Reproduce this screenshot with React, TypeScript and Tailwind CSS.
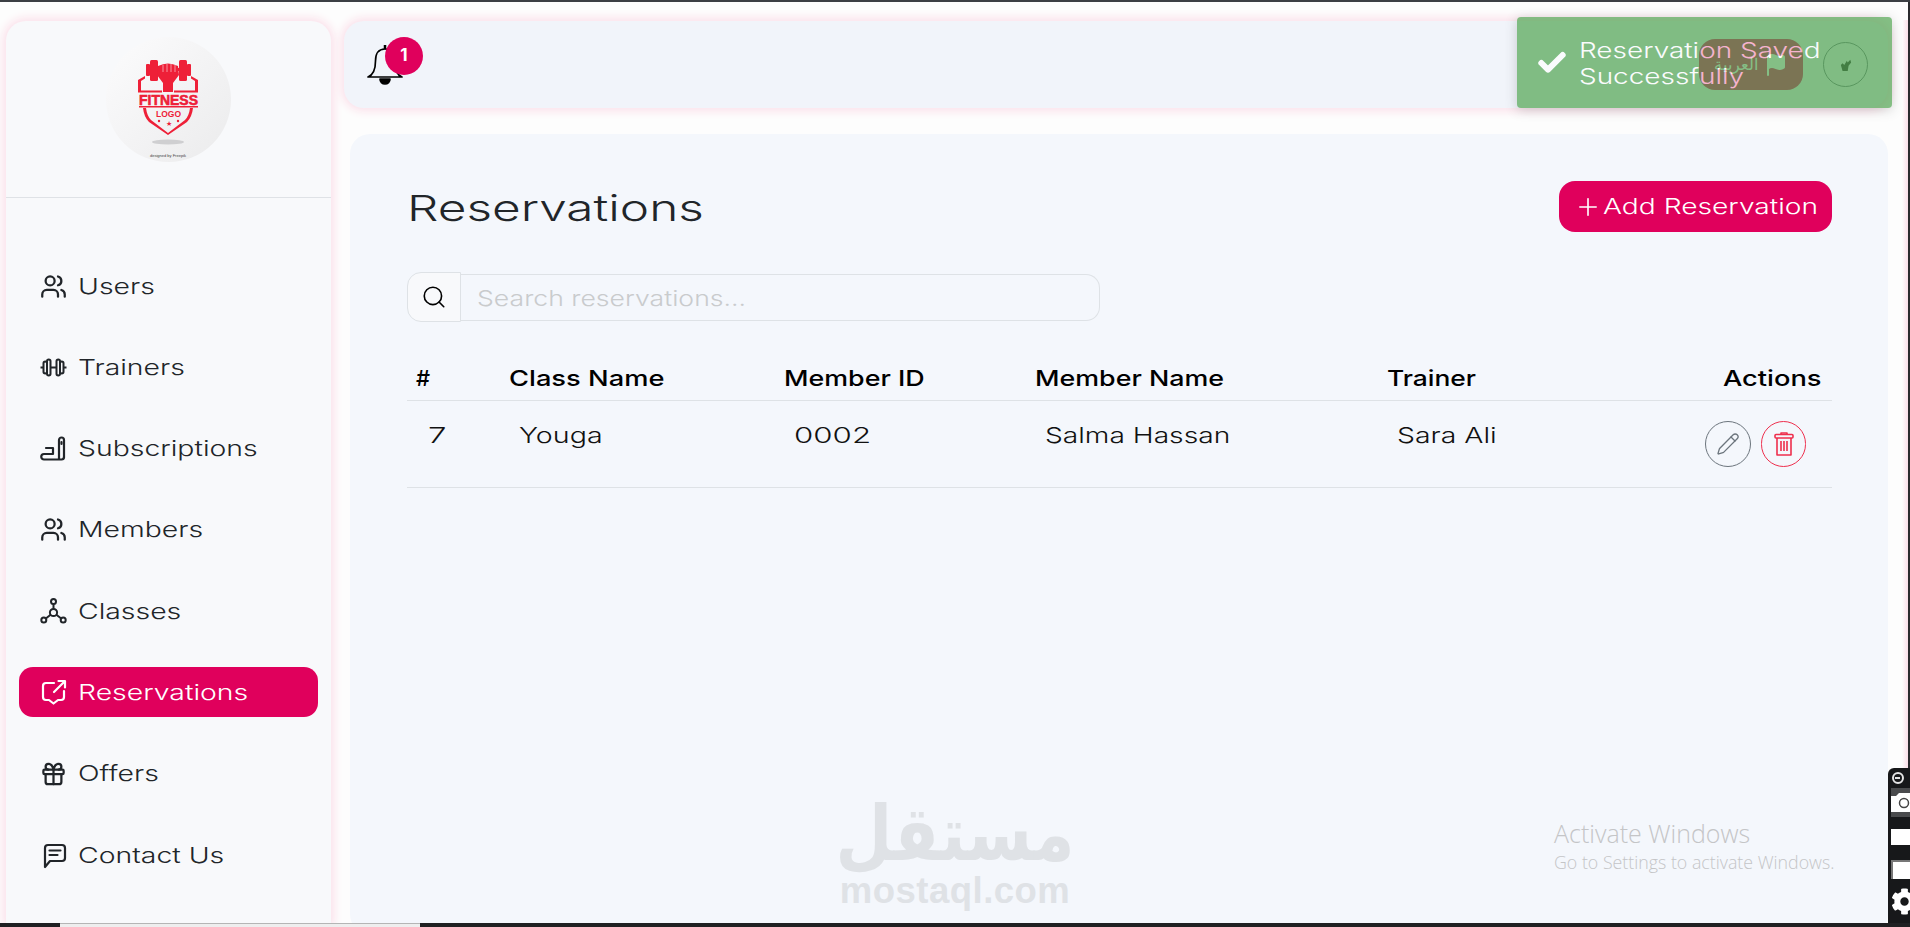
import { Check, Flag, Gift, Pencil, Plus, Search, Users } from "lucide-react";
import { FaCog } from "react-icons/fa";

const navItems = [
  { label: "Users", icon: <Users size={27} strokeWidth={2} /> },
  { label: "Trainers", icon: <BarbellIcon /> },
  { label: "Subscriptions", icon: <MatIcon /> },
  { label: "Members", icon: <Users size={27} strokeWidth={2} /> },
  { label: "Classes", icon: <NodesIcon /> },
  { label: "Reservations", icon: <ShareChatIcon />, active: true },
  { label: "Offers", icon: <Gift size={28} strokeWidth={2} /> },
  { label: "Contact Us", icon: <ChatIcon /> },
];

function BarbellIcon() {
  return (
    <svg width="27" height="27" viewBox="0 0 27 27" fill="none" stroke="currentColor" strokeWidth="2" strokeLinejoin="round">
      <rect x="3.500" y="7.500" width="3.500" height="12" rx="1.700" />
      <rect x="7" y="5.500" width="3.500" height="16" rx="1.700" />
      <rect x="16.500" y="5.500" width="3.500" height="16" rx="1.700" />
      <rect x="20" y="7.500" width="3.500" height="12" rx="1.700" />
      <path d="M10.500 13.500h6M0.500 13.500h3M23.500 13.500h3" />
    </svg>
  );
}

function MatIcon() {
  return (
    <svg width="27" height="27" viewBox="0 0 27 27" fill="none" stroke="currentColor" strokeWidth="2.200" strokeLinecap="round" strokeLinejoin="round">
      <path d="M19 24V5a2.500 2.500 0 0 1 5 0v17.500" />
      <path d="M24 22a2.500 2.500 0 0 1-2.500 2.500H4a2.500 2.500 0 0 1 0-5.500h9v-6H6" />
      <path d="M21.500 7v2" />
    </svg>
  );
}

function NodesIcon() {
  return (
    <svg width="27" height="27" viewBox="0 0 27 27" fill="none" stroke="currentColor" strokeWidth="2">
      <circle cx="13.500" cy="3.500" r="2.500" />
      <circle cx="13.500" cy="14.500" r="3.600" />
      <circle cx="3.800" cy="22" r="2.500" />
      <circle cx="23.200" cy="22" r="2.500" />
      <path d="M13.500 6v4.800M10.600 16.800 5.800 20.500M16.400 16.800l4.800 3.700" />
    </svg>
  );
}

function ShareChatIcon() {
  return (
    <svg width="27" height="27" viewBox="0 0 27 27" fill="none" stroke="currentColor" strokeWidth="2.200" strokeLinecap="round" strokeLinejoin="round">
      <path d="M14 4H6a3 3 0 0 0-3 3v11a3 3 0 0 0 3 3h3l4.500 3.500 4.500-3.500h3a3 3 0 0 0 3-3v-6" />
      <path d="M14 13 24.500 2.500M18.500 2h6.500v6.500" />
    </svg>
  );
}

function ChatIcon() {
  return (
    <svg width="27" height="27" viewBox="0 0 27 27" fill="none" stroke="currentColor" strokeWidth="2.200" strokeLinecap="round" strokeLinejoin="round">
      <path d="M5 25V6a3 3 0 0 1 3-3h14a3 3 0 0 1 3 3v10a3 3 0 0 1-3 3H10z" />
      <path d="M9.500 8.500h11M9.500 13h8" />
    </svg>
  );
}

function BellIcon() {
  return (
    <svg width="36" height="41" viewBox="0 0 36 41" fill="none" stroke="black" strokeWidth="1.700" strokeLinejoin="round">
      <path d="M18 5C11 5 8.500 10 8.500 17c0 8-2.500 14-7.500 16h34c-5-2-7.500-8-7.500-16C27.500 10 25 5 18 5z" />
      <path d="M18 1v4" strokeWidth="2.500" />
      <path d="M13 35h10a5 5 0 0 1-10 0z" fill="black" />
    </svg>
  );
}

function TrashIcon() {
  return (
    <svg width="26" height="26" viewBox="0 0 26 26" fill="none" stroke="currentColor" strokeWidth="1.600" strokeLinejoin="round">
      <path d="M10 3.500V2h6v1.500" />
      <rect x="4" y="3.500" width="18" height="3.500" rx="1" />
      <path d="M6 7v17h14V7" />
      <path d="M10 10v10M13 10v10M16 10v10" />
    </svg>
  );
}

function FitnessLogo() {
  return (
    <div className="h-[125px] w-[125px] rounded-full bg-gradient-to-br from-[#fcfcfd] to-[#ebebec]">
      <svg width="125" height="125" viewBox="0 0 125 125">
        <g fill="#ee2038">
          <rect x="40" y="27" width="4" height="12" rx="1" />
          <rect x="44" y="23" width="8" height="21" rx="1.500" />
          <rect x="73" y="23" width="8" height="21" rx="1.500" />
          <rect x="81" y="27" width="4" height="12" rx="1" />
          <rect x="52" y="31" width="21" height="3" />
          <path d="M52 29q10-5 20 0l1 9-6 8v9H57v-9l-6-8z" />
          <path d="M57 28v7M61 27v8M65 27v8M69 28v7" stroke="#f9c6cd" strokeWidth="0.700" />
          <path d="M32 43l7-4v2.500l-4 2.500v9.500h21v2H32zM92 43l-7-4v2.500l4 2.500v9.500H68v2h24z" />
          <rect x="33" y="69" width="59" height="1.500" />
          <path d="M37 71h3q1 8 5 12l17 13 17-13q4-4 5-12h3q-1 9-6 14L62 98 43 85q-5-5-6-14z" />
          <text x="62.500" y="68" textAnchor="middle" fontFamily="'Liberation Sans', sans-serif" fontWeight="700" fontSize="15" textLength="59" lengthAdjust="spacingAndGlyphs" stroke="#ee2038" strokeWidth="0.600">FITNESS</text>
          <text x="62.500" y="80" textAnchor="middle" fontFamily="'Liberation Sans', sans-serif" fontWeight="700" fontSize="9.500" textLength="25" lengthAdjust="spacingAndGlyphs">LOGO</text>
          <text x="62.500" y="89" textAnchor="middle" fontFamily="'DejaVu Sans', sans-serif" fontSize="7">★</text>
          <circle cx="53" cy="84" r="1.200" />
          <circle cx="72" cy="84" r="1.200" />
        </g>
        <ellipse cx="62" cy="105" rx="16" ry="2.500" fill="#cfcfd1" />
        <text x="62" y="120" textAnchor="middle" fontFamily="'Liberation Sans', sans-serif" fontSize="4" fill="#444">designed by Freepik</text>
      </svg>
    </div>
  );
}

function Sidebar() {
  return (
    <aside className="flex h-[902px] w-[325px] shrink-0 flex-col rounded-t-[20px] bg-[#f8f9fb] shadow-[0_0_10px_3px_#fbe0ea]">
      <div className="flex h-[177px] justify-center border-b border-[#dfe2e6] pt-4">
        <FitnessLogo />
      </div>
      <nav className="flex flex-col gap-[31.300px] px-[13px] pt-[63px]">
        {navItems.map((item) => (
          <a
            key={item.label}
            className={`flex h-[50px] items-center gap-[11px] rounded-[14px] pl-[21px] text-[22px] ${
              item.active ? "bg-[#e0005c] text-white" : "text-[#212529]"
            }`}
          >
            <span className="flex w-[27px] justify-center">{item.icon}</span>
            <span className="inline-block origin-left scale-x-[1.29]">{item.label}</span>
          </a>
        ))}
      </nav>
    </aside>
  );
}

function Header() {
  return (
    <header className="flex h-[87px] items-center justify-between rounded-[20px] bg-[#f1f4fa] pl-[23px] pr-[20px] shadow-[0_0_10px_3px_#fbe0ea]">
      <div className="relative">
        <BellIcon />
        <span className="absolute -top-[7px] left-[18px] flex h-[38px] w-[38px] items-center justify-center rounded-full bg-[#e0005c] text-[17px] font-bold text-white">
          1
        </span>
      </div>
      <div className="flex items-center gap-[20px]">
        <button className="flex h-[51px] w-[104px] items-center justify-center gap-[6px] rounded-[16px] bg-[#e0005c] text-white">
          <span className="font-['DejaVu_Sans',sans-serif] text-[16px]">العربية</span>
          <Flag size={24} fill="currentColor" />
        </button>
        <span className="flex h-[45px] w-[45px] items-center justify-center rounded-full border border-[#6c757d]">
          <svg width="12" height="14" viewBox="0 0 14 16" fill="#222">
            <path d="M3 15 1 8l2-2 2 2 3-5 1 2 3-3 1 3-3 4-1 6z" />
          </svg>
        </span>
      </div>
    </header>
  );
}

function Toast() {
  return (
    <div className="absolute left-[1517px] top-[17px] flex h-[91px] w-[375px] items-center gap-[11px] rounded-[4px] bg-[#51a552] pl-[19px] text-[22px] leading-[26px] text-white opacity-70 shadow-[0_2px_12px_rgba(0,0,0,0.25)]">
      <Check size={32} strokeWidth={4.500} />
      <span className="inline-block w-[210px] origin-left scale-x-[1.27]">Reservation Saved Successfully</span>
    </div>
  );
}

function ReservationsTable() {
  return (
    <table className="mt-[26px] w-full table-fixed border-collapse text-[22px] text-black">
      <thead>
        <tr className="h-[52px] border-b border-[#dee2e6] text-left align-middle">
          <th className="w-[102px] pl-[9px] pt-[10px] font-medium">#</th>
          <th className="w-[275px] pt-[10px] font-medium"><span className="inline-block origin-left scale-x-[1.24]">Class Name</span></th>
          <th className="w-[251px] pt-[10px] font-medium"><span className="inline-block origin-left scale-x-[1.22]">Member ID</span></th>
          <th className="w-[352px] pt-[10px] font-medium"><span className="inline-block origin-left scale-x-[1.22]">Member Name</span></th>
          <th className="pt-[10px] font-medium"><span className="inline-block origin-left scale-x-[1.2]">Trainer</span></th>
          <th className="w-[200px] pr-[10px] pt-[10px] text-right font-medium"><span className="inline-block origin-right scale-x-[1.24]">Actions</span></th>
        </tr>
      </thead>
      <tbody>
        <tr className="h-[87px] border-b border-[#dee2e6] text-[#111]">
          <td className="pb-[17px] pl-[21px]"><span className="inline-block origin-left scale-x-[1.5]">7</span></td>
          <td className="pb-[17px] pl-[10px]"><span className="inline-block origin-left scale-x-[1.3]">Youga</span></td>
          <td className="pb-[17px] pl-[10px]"><span className="inline-block origin-left scale-x-[1.42]">0002</span></td>
          <td className="pb-[17px] pl-[10px]"><span className="inline-block origin-left scale-x-[1.28]">Salma Hassan</span></td>
          <td className="pb-[17px] pl-[10px]"><span className="inline-block origin-left scale-x-[1.29]">Sara Ali</span></td>
          <td className="pr-[26px]">
            <div className="flex justify-end gap-[10px]">
              <button className="flex h-[46px] w-[46px] items-center justify-center rounded-full border border-[#6c757d] text-[#6c757d]">
                <Pencil size={24} strokeWidth={1.300} />
              </button>
              <button className="flex h-[46px] w-[45px] items-center justify-center rounded-full border border-[#ee2f4d] text-[#ee2f4d]">
                <TrashIcon />
              </button>
            </div>
          </td>
        </tr>
      </tbody>
    </table>
  );
}

function Watermarks() {
  return (
    <>
      <div className="absolute left-[840px] top-[794px] flex w-[230px] flex-col items-center text-[#dfe2e6]">
        <span className="inline-block scale-x-[0.86] whitespace-nowrap font-['DejaVu_Sans',sans-serif] text-[76px] font-bold leading-[79px]">مستقل</span>
        <span className="font-['Liberation_Sans',sans-serif] text-[36.500px] font-bold leading-[36px] tracking-[0.500px]">mostaql.com</span>
      </div>
      <div className="absolute left-[1554px] top-[816px] font-['Open_Sans',sans-serif] text-[#c4c5c7]">
        <p className="text-[25px] leading-[34px]">Activate Windows</p>
        <p className="text-[17.800px] leading-[24px]">Go to Settings to activate Windows.</p>
      </div>
    </>
  );
}

function CaptureWidget() {
  return (
    <div className="absolute left-[1888px] top-[768px] flex h-[155px] w-[22px] flex-col overflow-hidden rounded-tl-[6px] bg-[#17181a] pl-[3px] pt-[3px]">
      <svg width="16" height="14" viewBox="0 0 16 14" fill="none" stroke="#e5e5e5" strokeWidth="2" className="shrink-0">
        <circle cx="7" cy="7" r="5" />
        <path d="M4 7h5" />
      </svg>
      <svg width="19" height="29" viewBox="0 0 19 29" className="mt-[3px] shrink-0">
        <rect width="19" height="29" fill="#4a4b4d" />
        <path d="M0 8h5l3-3h11v19H0z" fill="white" />
        <circle cx="13" cy="15" r="4.500" fill="white" stroke="#444" strokeWidth="1.500" />
      </svg>
      <div className="mt-[12px] h-[16px] w-[19px] shrink-0 bg-white" />
      <div className="mt-[15px] h-[19px] w-[19px] shrink-0 border-l-2 border-t-2 border-[#777] bg-white" />
      <FaCog size={27} color="white" className="mt-[9px] shrink-0" />
    </div>
  );
}

export default function App() {
  return (
    <div className="relative h-[927px] w-[1910px] overflow-hidden bg-[#fdfdfd] font-['Inter',sans-serif] font-light">
      <div className="h-[2px] bg-[#3c3f44]" />
      <div className="flex gap-[13px] pl-[6px] pt-[19px]">
        <Sidebar />
        <div className="flex w-[1544px] flex-col">
          <Header />
          <main className="ml-[6px] mt-[26px] h-[800px] rounded-[20px] bg-[#f4f7fc] pl-[57px] pr-[56px] pt-[47px]">
            <div className="flex h-[51px] items-center justify-between">
              <h1 className="mt-[4px] inline-block origin-left scale-x-[1.375] text-[36px] leading-[51px] text-[#212529]">Reservations</h1>
              <button className="flex h-[51px] w-[273px] items-center gap-[1px] rounded-[16px] bg-[#e0005c] pl-[15px] text-[22px] text-white">
                <Plus size={28} strokeWidth={1.400} />
                <span className="inline-block origin-left scale-x-[1.28]">Add Reservation</span>
              </button>
            </div>
            <div className="mt-[40px] flex h-[50px] w-[693px] items-center">
              <span className="flex h-[50px] w-[54px] items-center justify-center rounded-l-[14px] border border-[#dee2e6] bg-[#f8f9fb] text-black">
                <Search size={26} strokeWidth={1.500} />
              </span>
              <div className="h-[47px] flex-1 rounded-r-[14px] border border-l-0 border-[#dee2e6] pl-4 pt-[2px]">
                <input
                  placeholder="Search reservations..."
                  className="h-[42px] w-[480px] origin-left scale-x-[1.21] bg-transparent text-[22px] font-light outline-none placeholder:text-[#c9cbcd]"
                />
              </div>
            </div>
            <ReservationsTable />
          </main>
        </div>
      </div>
      <Toast />
      <Watermarks />
      <div className="absolute left-[1902px] top-[20px] h-[748px] w-[6px] bg-gradient-to-r from-[#fdfdfd] to-[#fbdfe9]" />
      <div className="absolute right-0 top-[2px] h-[766px] w-[2px] bg-[#2a2b2e]" />
      <CaptureWidget />
      <div className="absolute bottom-0 left-0 h-[4px] w-full bg-[#1f2022]">
        <div className="ml-[60px] h-full w-[360px] border-t border-[#b5b5b5] bg-[#eeeeee]" />
      </div>
    </div>
  );
}
